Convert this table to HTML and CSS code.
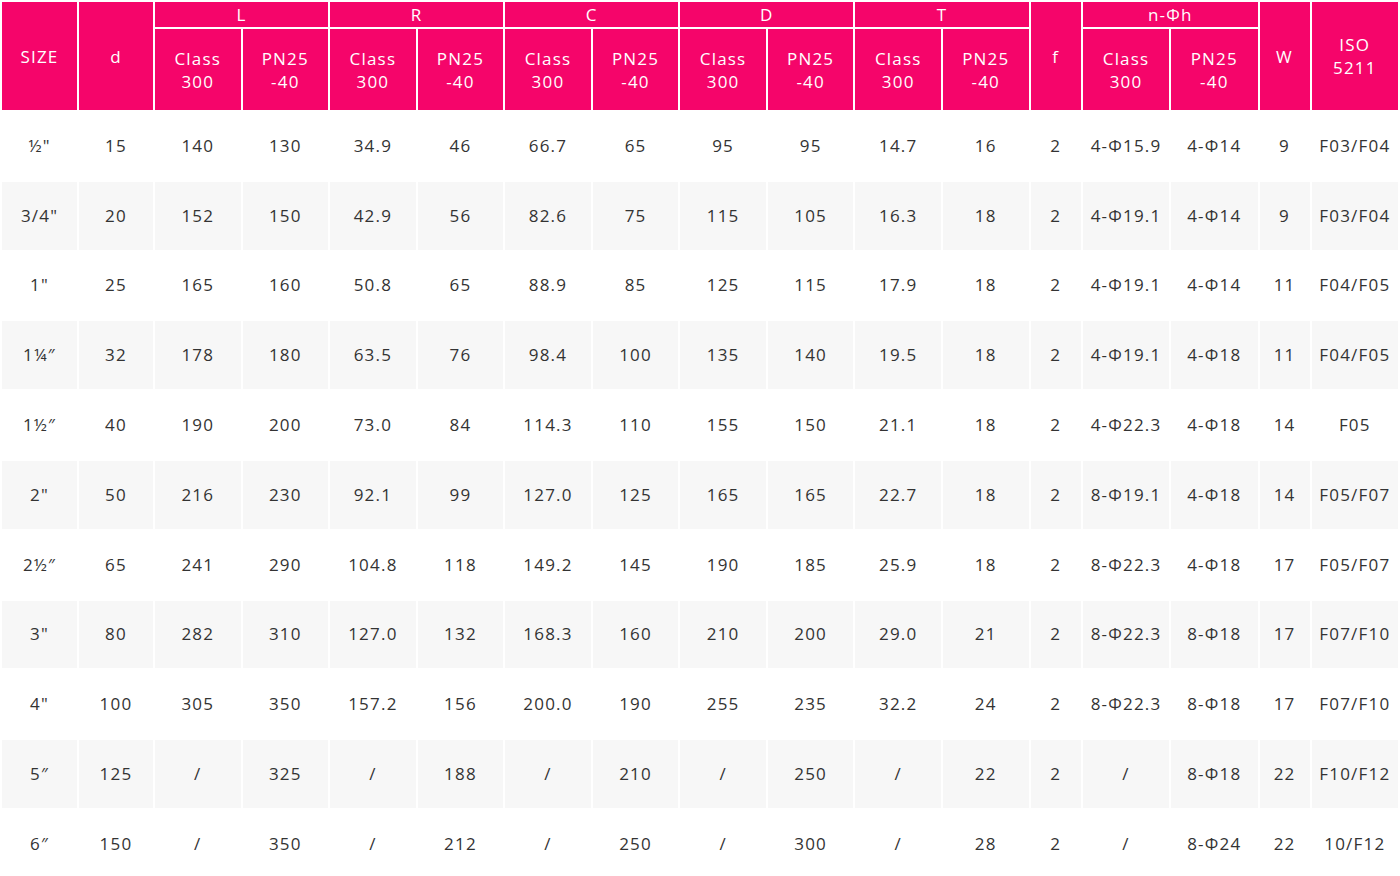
FILE: index.html
```html
<!DOCTYPE html>
<html>
<head>
<meta charset="utf-8">
<link rel="stylesheet" href="styles.css">
</head>
<body>
<table class="spec">
<colgroup>
<col class="c-size"><col class="c-d">
<col class="c-n"><col class="c-n"><col class="c-n"><col class="c-n"><col class="c-n"><col class="c-n"><col class="c-n"><col class="c-n"><col class="c-n"><col class="c-n">
<col class="c-f">
<col class="c-h1"><col class="c-h2">
<col class="c-w">
<col class="c-iso">
</colgroup>
<thead>
<tr class="h1">
<th rowspan="2">SIZE</th><th rowspan="2">d</th>
<th colspan="2">L</th><th colspan="2">R</th><th colspan="2">C</th><th colspan="2">D</th><th colspan="2">T</th>
<th rowspan="2">f</th><th colspan="2">n-Φh</th><th rowspan="2">W</th><th rowspan="2">ISO<br>5211</th>
</tr>
<tr class="h2">
<th>Class<br>300</th><th>PN25<br>-40</th>
<th>Class<br>300</th><th>PN25<br>-40</th>
<th>Class<br>300</th><th>PN25<br>-40</th>
<th>Class<br>300</th><th>PN25<br>-40</th>
<th>Class<br>300</th><th>PN25<br>-40</th>
<th>Class<br>300</th><th>PN25<br>-40</th>
</tr>
</thead>
<tbody>
<tr><td>½"</td><td>15</td><td>140</td><td>130</td><td>34.9</td><td>46</td><td>66.7</td><td>65</td><td>95</td><td>95</td><td>14.7</td><td>16</td><td>2</td><td>4-Φ15.9</td><td>4-Φ14</td><td>9</td><td>F03/F04</td></tr>
<tr><td>3/4"</td><td>20</td><td>152</td><td>150</td><td>42.9</td><td>56</td><td>82.6</td><td>75</td><td>115</td><td>105</td><td>16.3</td><td>18</td><td>2</td><td>4-Φ19.1</td><td>4-Φ14</td><td>9</td><td>F03/F04</td></tr>
<tr><td>1"</td><td>25</td><td>165</td><td>160</td><td>50.8</td><td>65</td><td>88.9</td><td>85</td><td>125</td><td>115</td><td>17.9</td><td>18</td><td>2</td><td>4-Φ19.1</td><td>4-Φ14</td><td>11</td><td>F04/F05</td></tr>
<tr><td>1¼″</td><td>32</td><td>178</td><td>180</td><td>63.5</td><td>76</td><td>98.4</td><td>100</td><td>135</td><td>140</td><td>19.5</td><td>18</td><td>2</td><td>4-Φ19.1</td><td>4-Φ18</td><td>11</td><td>F04/F05</td></tr>
<tr><td>1½″</td><td>40</td><td>190</td><td>200</td><td>73.0</td><td>84</td><td>114.3</td><td>110</td><td>155</td><td>150</td><td>21.1</td><td>18</td><td>2</td><td>4-Φ22.3</td><td>4-Φ18</td><td>14</td><td>F05</td></tr>
<tr><td>2"</td><td>50</td><td>216</td><td>230</td><td>92.1</td><td>99</td><td>127.0</td><td>125</td><td>165</td><td>165</td><td>22.7</td><td>18</td><td>2</td><td>8-Φ19.1</td><td>4-Φ18</td><td>14</td><td>F05/F07</td></tr>
<tr><td>2½″</td><td>65</td><td>241</td><td>290</td><td>104.8</td><td>118</td><td>149.2</td><td>145</td><td>190</td><td>185</td><td>25.9</td><td>18</td><td>2</td><td>8-Φ22.3</td><td>4-Φ18</td><td>17</td><td>F05/F07</td></tr>
<tr><td>3"</td><td>80</td><td>282</td><td>310</td><td>127.0</td><td>132</td><td>168.3</td><td>160</td><td>210</td><td>200</td><td>29.0</td><td>21</td><td>2</td><td>8-Φ22.3</td><td>8-Φ18</td><td>17</td><td>F07/F10</td></tr>
<tr><td>4"</td><td>100</td><td>305</td><td>350</td><td>157.2</td><td>156</td><td>200.0</td><td>190</td><td>255</td><td>235</td><td>32.2</td><td>24</td><td>2</td><td>8-Φ22.3</td><td>8-Φ18</td><td>17</td><td>F07/F10</td></tr>
<tr><td>5″</td><td>125</td><td>/</td><td>325</td><td>/</td><td>188</td><td>/</td><td>210</td><td>/</td><td>250</td><td>/</td><td>22</td><td>2</td><td>/</td><td>8-Φ18</td><td>22</td><td>F10/F12</td></tr>
<tr><td>6″</td><td>150</td><td>/</td><td>350</td><td>/</td><td>212</td><td>/</td><td>250</td><td>/</td><td>300</td><td>/</td><td>28</td><td>2</td><td>/</td><td>8-Φ24</td><td>22</td><td>10/F12</td></tr>
</tbody>
</table>
</body>
</html>
```

FILE: styles.css
```css
html, body {
  margin: 0;
  padding: 0;
  background: #ffffff;
}
body {
  font-family: "Open Sans", "Noto Sans", "DejaVu Sans", sans-serif;
  color: #333333;
}
.spec {
  width: 1400px;
  table-layout: fixed;
  border-collapse: separate;
  border-spacing: 2px;
  font-size: 17px;
  letter-spacing: 1.2px;
}
.c-size { width: 75px; }
.c-d { width: 74px; }
.c-n { width: 85.55px; }
.c-f { width: 50.5px; }
.c-h1 { width: 86px; }
.c-h2 { width: 86.5px; }
.c-w { width: 50px; }
.c-iso { width: 86.5px; }
.spec th {
  background: #f5056a;
  color: #ffffff;
  font-weight: 400;
  text-align: center;
  vertical-align: middle;
  padding: 0;
  line-height: 23px;
}
.spec .h1 th { height: 25px; }
.spec .h2 th { height: 81px; }
.spec td {
  text-align: center;
  vertical-align: middle;
  padding: 0;
  height: 67.8px;
  line-height: 20px;
}
.spec tbody tr:nth-child(even) td {
  background: #f7f7f7;
}
```
